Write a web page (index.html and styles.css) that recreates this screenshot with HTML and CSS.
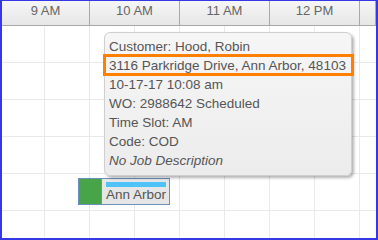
FILE: index.html
```html
<!DOCTYPE html>
<html lang="en">
<head>
    <meta charset="UTF-8">
    <meta name="viewport" content="width=device-width, initial-scale=1.0">
    <title>Schedule</title>
    <link rel="stylesheet" href="styles.css">
</head>
<body>

    <div class="scheduler">
        <div class="timeline-header">
            <div class="slot">9 AM</div>
            <div class="slot">10 AM</div>
            <div class="slot">11 AM</div>
            <div class="slot">12 PM</div>
            <div class="slot"></div>
        </div>

        <div class="timeline-body">
            <!-- Job on the board -->
            <div class="job" style="left: 76px; top: 152px;">
                <div class="job-status"></div>
                <div class="job-label">
                    <div class="job-bar"></div>
                    <span>Ann Arbor</span>
                </div>
            </div>

            <!-- Hover tooltip -->
            <div class="tooltip">
                <div class="highlight"></div>
                <div>Customer: Hood, Robin</div>
                <div>3116 Parkridge Drive, Ann Arbor, 48103</div>
                <div>10-17-17 10:08 am</div>
                <div>WO: 2988642 Scheduled</div>
                <div>Time Slot: AM</div>
                <div>Code: COD</div>
                <div class="no-desc">No Job Description</div>
            </div>
        </div>
    </div>

</body>
</html>
```

FILE: styles.css
```css
body {
    margin: 0;
    font-family: "Liberation Sans", Arial, sans-serif;
    font-size: 13px;
    color: #555;
}
.scheduler {
    width: 378px;
    height: 240px;
    box-sizing: border-box;
    border: 2px solid #3438e6;
    border-top-width: 1px;
    overflow: hidden;
    background: #fff;
}
.timeline-header {
    display: grid;
    grid-template-columns: 88px 90px 90px 90px 1fr;
    height: 25px;
    box-sizing: border-box;
    border-bottom: 1px solid #a8a8a8;
    background: linear-gradient(#f6f6f6, #e6e6e6);
}
.slot {
    border-right: 1px solid #a8a8a8;
    text-align: center;
    line-height: 20px;
    color: #666;
}
.timeline-body {
    position: relative;
    height: 212px;
    background-image:
        linear-gradient(to right, #e9e9e9 1px, transparent 1px),
        linear-gradient(to bottom, #e9e9e9 1px, transparent 1px);
    background-size: 45px 37px;
    background-position: 42px 36px;
}
.tooltip {
    position: absolute;
    left: 102px;
    top: 6px;
    width: 248px;
    height: 144px;
    box-sizing: border-box;
    padding: 4px 4px 0 4px;
    border: 1px solid #cfcfcf;
    border-radius: 6px;
    background: linear-gradient(#f6f6f6, #ececec);
    box-shadow: 2px 2px 3px rgba(0, 0, 0, 0.3);
    font-size: 13.5px;
    line-height: 19px;
}
.highlight {
    position: absolute;
    left: -2px;
    right: -3px;
    top: 21px;
    height: 22px;
    box-sizing: border-box;
    border: 3px solid #ff7f00;
}
.no-desc {
    font-style: italic;
}
.job {
    position: absolute;
    display: flex;
    width: 92px;
    height: 27px;
    box-sizing: border-box;
    border: 1px solid #6a8fbe;
}
.job-status {
    width: 22px;
    background: #48a448;
    border-right: 1px solid #6a8fbe;
}
.job-label {
    flex: 1;
    overflow: hidden;
    background: #e6e6e6;
    padding: 3px 2px 0 4px;
    font-size: 13.5px;
    line-height: 16px;
    white-space: nowrap;
}
.job-bar {
    height: 5px;
    margin-right: 1px;
    background: #4fc3f7;
}
```
